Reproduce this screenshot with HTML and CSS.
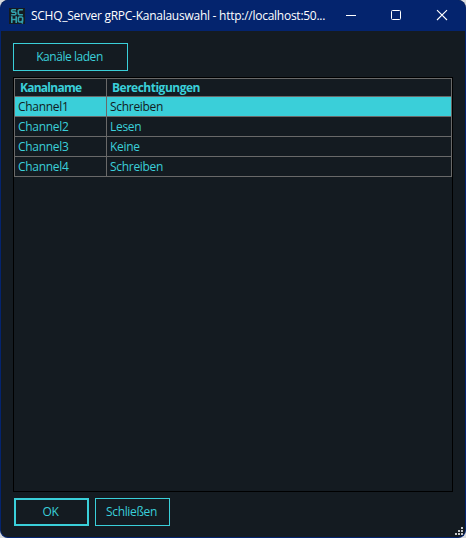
FILE: index.html
```html
<!DOCTYPE html>
<html lang="de">
<head>
<meta charset="utf-8">
<title>SCHQ_Server gRPC-Kanalauswahl</title>
<link rel="stylesheet" href="styles.css">
</head>
<body>
<main class="window">
  <header class="titlebar">
    <svg class="logo" width="16" height="16" viewBox="0 0 16 16"><rect width="16" height="16" fill="#141b21"/><g fill="none" stroke="#329fab" stroke-width="1.6"><path d="M7 1.7H3.4L2.7 2.4V3.4L3.4 4.1H6L6.8 4.8V6.1L6 6.8H2.2M13.9 1.7H10.3L9.3 2.7V5.8L10.3 6.8H13.9M2.8 8.2V15M7.2 8.2V15M2.8 11.5H7.2M10.2 9H12.8L13.6 9.8V13.2L12.8 14H10.2L9.4 13.2V9.8ZM11.8 13L13.8 15.4"/></g></svg>
    <h1 class="title">SCHQ_Server gRPC-Kanalauswahl - http://localhost:50...</h1>
    <div class="controls">
      <svg width="46" height="31" viewBox="0 0 46 31"><path d="M16 15.5H26" stroke="#fff"/></svg>
      <svg width="46" height="31" viewBox="0 0 46 31"><rect x="15.5" y="10.5" width="9" height="9" rx="1" fill="none" stroke="#fff"/></svg>
      <svg width="46" height="31" viewBox="0 0 46 31"><path d="M15 10.2L25 20M25 10.2L15 20" stroke="#fff" stroke-width="1.1"/></svg>
    </div>
  </header>
  <section class="content">
    <button class="btn load">Kanäle laden</button>
    <div class="grid">
      <table>
        <thead><tr><th class="name">Kanalname</th><th>Berechtigungen</th></tr></thead>
        <tbody>
          <tr class="selected"><td>Channel1</td><td>Schreiben</td></tr>
          <tr><td>Channel2</td><td>Lesen</td></tr>
          <tr><td>Channel3</td><td>Keine</td></tr>
          <tr><td>Channel4</td><td>Schreiben</td></tr>
        </tbody>
      </table>
    </div>
    <footer class="actions">
      <button class="btn primary">OK</button>
      <button class="btn">Schließen</button>
    </footer>
  </section>
  <svg class="grip" width="8" height="8" viewBox="0 0 8 8" fill="#c3c6c8"><path d="M6 0h2v2H6zM3 3h2v2H3zM6 3h2v2H6zM0 6h2v2H0zM3 6h2v2H3zM6 6h2v2H6z"/></svg>
</main>
</body>
</html>
```
FILE: styles.css
```css
* { box-sizing: border-box; }
body {
  margin: 0;
  background: #d8dadd;
  font: 12px/16px "Open Sans", "Noto Sans", sans-serif;
  color: #3acfd9;
}
.window {
  position: relative;
  width: 466px;
  height: 538px;
  border: 1px solid #04246e;
  border-top: 0;
  border-radius: 8px;
  background: #141b21;
  overflow: hidden;
}
.titlebar {
  display: flex;
  align-items: center;
  height: 31px;
  padding-left: 8px;
  background: #04246e;
}
.logo { flex: none; }
.title {
  flex: none;
  width: 299px;
  margin: 0 0 0 6px;
  padding-top: 1px;
  font-size: 12px;
  font-weight: 400;
  letter-spacing: -0.26px;
  color: #fff;
  white-space: nowrap;
}
.controls { display: flex; flex: none; }
.controls svg { display: block; }
.content { padding: 12px 12px 0; }
.btn {
  width: 75px;
  height: 28px;
  padding: 0 2px 0 0;
  border: 1px solid #3acfd9;
  background: transparent;
  color: inherit;
  font: inherit;
  letter-spacing: -0.35px;
}
.load {
  display: block;
  width: 115px;
  letter-spacing: -0.45px;
}
.primary { border-width: 2px; }
.grid {
  width: 440px;
  height: 415px;
  margin-top: 6px;
  border: 1px solid #000;
}
table {
  width: 438px;
  table-layout: fixed;
  border-collapse: separate;
  border-spacing: 0;
  border-top: 1px solid #696969;
  border-left: 1px solid #696969;
}
th, td {
  height: 20px;
  padding: 0 3px;
  border-right: 1px solid #696969;
  border-bottom: 1px solid #696969;
  text-align: left;
  letter-spacing: -0.3px;
}
th {
  height: 18px;
  padding: 1px 5px 0;
  font-weight: 700;
  letter-spacing: -0.5px;
}
.name {
  width: 92px;
  letter-spacing: -0.75px;
}
.selected { background: #3acfd9; color: #141b21; }
.actions {
  display: flex;
  gap: 6px;
  margin: 6px 0 0 1px;
}
.grip {
  position: absolute;
  right: 2px;
  bottom: 2px;
}
```
